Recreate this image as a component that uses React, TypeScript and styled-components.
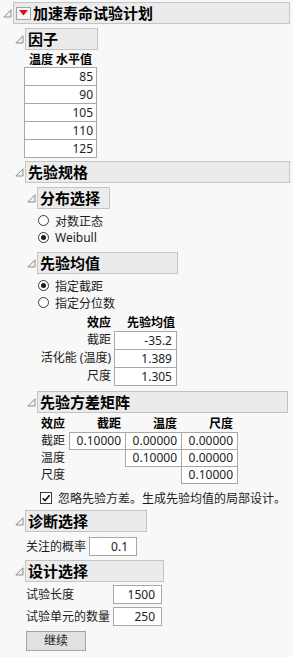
import React from "react";
import styled, { createGlobalStyle } from "styled-components";

const GlobalStyle = createGlobalStyle`
  html, body {
    margin: 0;
    padding: 0;
    background: #f8f8f8;
  }
  body {
    font-family: "Noto Sans", "Noto Sans CJK SC", sans-serif;
    font-size: 12px;
    color: #1c1c1c;
  }
`;

const Page = styled.div`
  width: 293px;
  height: 657px;
  box-sizing: border-box;
  padding: 2px 0 0 3px;
  overflow: hidden;
`;

const Section = styled.section<{ $top: number }>`
  margin-top: ${(p) => p.$top}px;
`;

const HeaderRow = styled.div`
  display: flex;
  align-items: center;
`;

const DisclosureIcon = styled.svg`
  flex: none;
  margin-right: 1px;
`;

const HeaderBox = styled.div<{ $width: number }>`
  width: ${(p) => p.$width}px;
  height: 22px;
  box-sizing: border-box;
  border: 1px solid #c4c4c4;
  background: #ebebeb;
  display: flex;
  align-items: center;
  padding: 0 2px;
  font-size: 15px;
  font-weight: bold;
  line-height: 20px;
  color: #000;
  white-space: nowrap;
  overflow: hidden;
`;

const MenuButton = styled.span`
  flex: none;
  width: 15px;
  height: 13px;
  box-sizing: border-box;
  border: 1px solid #a3a3a3;
  background: #f6f6f6;
  display: flex;
  align-items: center;
  justify-content: center;
  margin: 0 2px 0 0;
`;

const Body = styled.div<{ $indent: number }>`
  padding-left: ${(p) => p.$indent}px;
`;

type OutlineProps = {
  title: string;
  width: number;
  top?: number;
  indent?: number;
  menu?: boolean;
  children?: React.ReactNode;
};

const Outline: React.FC<OutlineProps> = ({
  title,
  width,
  top = 4,
  indent = 11,
  menu,
  children,
}) => (
  <Section $top={top}>
    <HeaderRow>
      <DisclosureIcon width="9" height="9" viewBox="0 0 9 9">
        <polygon
          points="8,0.8 8,8 0.8,8"
          fill="#f2f2f2"
          stroke="#8c8c8c"
          strokeWidth="1"
        />
      </DisclosureIcon>
      <HeaderBox $width={width}>
        {menu && (
          <MenuButton>
            <svg width="9" height="6" viewBox="0 0 9 6">
              <polygon points="0,0 9,0 4.5,5.5" fill="#d6152a" />
            </svg>
          </MenuButton>
        )}
        {title}
      </HeaderBox>
    </HeaderRow>
    <Body $indent={indent}>{children}</Body>
  </Section>
);

/* 因子 column */
const FactorColumn = styled.div`
  width: 73px;
  display: flex;
  flex-direction: column;
`;

const ColumnTitle = styled.div`
  margin-top: 2px;
  height: 15px;
  line-height: 15px;
  font-weight: bold;
  text-align: center;
  white-space: nowrap;
  color: #000;
`;

const Cell = styled.div<{ $h?: number; $pad?: number }>`
  height: ${(p) => p.$h ?? 19}px;
  box-sizing: border-box;
  border: 1px solid #a8a8a8;
  background: #fff;
  margin-bottom: -1px;
  text-align: right;
  padding-right: ${(p) => p.$pad ?? 3}px;
  line-height: ${(p) => (p.$h ?? 19) - 2}px;
  color: #222;
  white-space: nowrap;
`;

/* radio / checkbox */
const OptionList = styled.div`
  margin-top: 3px;
`;

const OptionRow = styled.label`
  display: flex;
  align-items: center;
  height: 17px;
  white-space: nowrap;
`;

const RadioDot = styled.span<{ $on?: boolean }>`
  flex: none;
  width: 11px;
  height: 11px;
  box-sizing: border-box;
  border: 1px solid #3a3a3a;
  border-radius: 50%;
  background: #fff;
  display: flex;
  align-items: center;
  justify-content: center;
  margin-right: 6px;
  &::after {
    content: "";
    width: 5px;
    height: 5px;
    border-radius: 50%;
    background: ${(p) => (p.$on ? "#1a1a1a" : "transparent")};
  }
`;

const Radio: React.FC<{ on?: boolean; label: string }> = ({ on, label }) => (
  <OptionRow>
    <RadioDot $on={on} />
    {label}
  </OptionRow>
);

const CheckRow = styled.label`
  display: flex;
  align-items: center;
  height: 16px;
  margin: 7px 0 0 2px;
  white-space: nowrap;
`;

const CheckBox = styled.span`
  flex: none;
  width: 12px;
  height: 12px;
  box-sizing: border-box;
  border: 1px solid #3a3a3a;
  background: #fff;
  display: flex;
  align-items: center;
  justify-content: center;
  margin-right: 6px;
`;

/* 先验均值 table */
const MeanGrid = styled.div`
  display: grid;
  grid-template-columns: 73px 63px;
  column-gap: 3px;
  margin-top: 3px;
`;

const HeadCell = styled.div<{ $pad?: number }>`
  height: 17px;
  line-height: 17px;
  font-weight: bold;
  text-align: right;
  padding-right: ${(p) => p.$pad ?? 0}px;
  color: #000;
  white-space: nowrap;
`;

const RowLabel = styled.div<{ $h?: number; $align?: string }>`
  height: ${(p) => p.$h ?? 18}px;
  line-height: ${(p) => p.$h ?? 18}px;
  text-align: ${(p) => p.$align ?? "right"};
  white-space: nowrap;
`;

/* 先验方差矩阵 */
const MatrixGrid = styled.div`
  display: grid;
  grid-template-columns: 28px 56px 56px 56px;
  margin: 2px 0 0 3px;
`;

const MatrixCell = styled.div`
  height: 18px;
  box-sizing: border-box;
  border: 1px solid #a8a8a8;
  background: #fff;
  margin: 0 -1px -1px 0;
  text-align: right;
  padding-right: 4px;
  line-height: 16px;
  color: #222;
`;

const Blank = styled.div``;

/* 诊断 / 设计 forms */
const FormGrid = styled.div<{ $input: number; $top: number }>`
  display: grid;
  grid-template-columns: auto ${(p) => p.$input}px;
  column-gap: 3px;
  row-gap: 3px;
  justify-content: start;
  margin-top: ${(p) => p.$top}px;
  align-items: center;
`;

const FormLabel = styled.div`
  white-space: nowrap;
  line-height: 19px;
`;

const FormInput = styled.div<{ $pad: number }>`
  height: 19px;
  box-sizing: border-box;
  border: 1px solid #a8a8a8;
  background: #fff;
  text-align: right;
  padding-right: ${(p) => p.$pad}px;
  line-height: 17px;
  color: #222;
`;

const Button = styled.button`
  display: block;
  margin-top: 5px;
  width: 60px;
  height: 20px;
  box-sizing: border-box;
  border: 1px solid #a3a3a3;
  background: #e1e1e1;
  font-family: inherit;
  font-size: 12px;
  line-height: 18px;
  padding: 0;
  color: #1c1c1c;
`;

const factorLevels = ["85", "90", "105", "110", "125"];

const priorMeans = [
  { effect: "截距", value: "-35.2" },
  { effect: "活化能 (温度)", value: "1.389" },
  { effect: "尺度", value: "1.305" },
];

const matrixRows: { label: string; cells: (string | null)[] }[] = [
  { label: "截距", cells: ["0.10000", "0.00000", "0.00000"] },
  { label: "温度", cells: [null, "0.10000", "0.00000"] },
  { label: "尺度", cells: [null, null, "0.10000"] },
];

const App: React.FC = () => (
  <>
    <GlobalStyle />
    <Page>
      <Outline title="加速寿命试验计划" width={277} top={0} indent={12} menu>
        <Outline title="因子" width={73} indent={9}>
          <FactorColumn>
            <ColumnTitle>温度 水平值</ColumnTitle>
            {factorLevels.map((v) => (
              <Cell key={v}>{v}</Cell>
            ))}
          </FactorColumn>
        </Outline>

        <Outline title="先验规格" width={265} top={4} indent={12}>
          <Outline title="分布选择" width={73}>
            <OptionList>
              <Radio label="对数正态" />
              <Radio on label="Weibull" />
            </OptionList>
          </Outline>

          <Outline title="先验均值" width={141} top={6}>
            <OptionList>
              <Radio on label="指定截距" />
              <Radio label="指定分位数" />
            </OptionList>
            <MeanGrid>
              <HeadCell>效应</HeadCell>
              <HeadCell $pad={2}>先验均值</HeadCell>
              {priorMeans.map((m) => (
                <React.Fragment key={m.effect}>
                  <RowLabel>{m.effect}</RowLabel>
                  <Cell $pad={4}>{m.value}</Cell>
                </React.Fragment>
              ))}
            </MeanGrid>
          </Outline>

          <Outline title="先验方差矩阵" width={251} top={6}>
            <MatrixGrid>
              <HeadCell style={{ textAlign: "left" }}>效应</HeadCell>
              <HeadCell $pad={4}>截距</HeadCell>
              <HeadCell $pad={4}>温度</HeadCell>
              <HeadCell $pad={4}>尺度</HeadCell>
              {matrixRows.map((r) => (
                <React.Fragment key={r.label}>
                  <RowLabel $h={17} $align="left">
                    {r.label}
                  </RowLabel>
                  {r.cells.map((c, i) =>
                    c === null ? (
                      <Blank key={i} />
                    ) : (
                      <MatrixCell key={i}>{c}</MatrixCell>
                    )
                  )}
                </React.Fragment>
              ))}
            </MatrixGrid>
            <CheckRow>
              <CheckBox>
                <svg width="10" height="10" viewBox="0 0 10 10">
                  <path
                    d="M1.6 5.2 L4 7.6 L8.6 2.2"
                    fill="none"
                    stroke="#111"
                    strokeWidth="1.6"
                  />
                </svg>
              </CheckBox>
              忽略先验方差。生成先验均值的局部设计。
            </CheckRow>
          </Outline>
        </Outline>

        <Outline title="诊断选择" width={122} top={4}>
          <FormGrid $input={48} $top={5}>
            <FormLabel>关注的概率</FormLabel>
            <FormInput $pad={8}>0.1</FormInput>
          </FormGrid>
        </Outline>

        <Outline title="设计选择" width={139} top={4}>
          <FormGrid $input={49} $top={3}>
            <FormLabel>试验长度</FormLabel>
            <FormInput $pad={6}>1500</FormInput>
            <FormLabel>试验单元的数量</FormLabel>
            <FormInput $pad={6}>250</FormInput>
          </FormGrid>
          <Button>继续</Button>
        </Outline>
      </Outline>
    </Page>
  </>
);

export default App;
